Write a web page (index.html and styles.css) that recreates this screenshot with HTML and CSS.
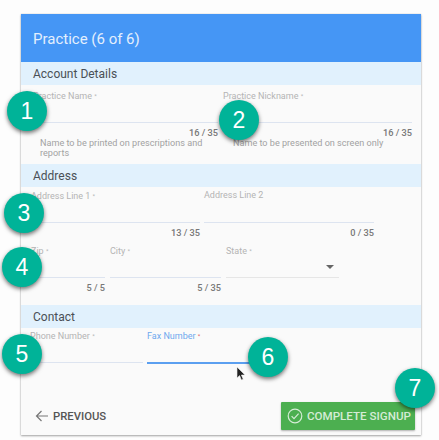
FILE: index.html
```html
<!DOCTYPE html>
<html lang="en">
<head>
<meta charset="utf-8">
<title>Practice</title>
<link rel="stylesheet" href="styles.css">
</head>
<body>
<main class="card">
  <header class="card-head">Practice (6 of 6)</header>
  <h2 class="band">Account Details</h2>
  <div class="row row-account">
    <div class="field f-name">
      <label class="lbl">Practice Name <i>*</i></label>
      <div class="line"></div>
      <div class="count">16 / 35</div>
      <p class="hint">Name to be printed on prescriptions and reports</p>
    </div>
    <div class="field f-nick">
      <label class="lbl">Practice Nickname <i>*</i></label>
      <div class="line"></div>
      <div class="count">16 / 35</div>
      <p class="hint">Name to be presented on screen only</p>
    </div>
  </div>
  <h2 class="band">Address</h2>
  <div class="row row-address">
    <div class="field f-addr1">
      <label class="lbl">Address Line 1 <i>*</i></label>
      <div class="line"></div>
      <div class="count">13 / 35</div>
    </div>
    <div class="field f-addr2">
      <label class="lbl">Address Line 2</label>
      <div class="line"></div>
      <div class="count">0 / 35</div>
    </div>
  </div>
  <div class="row row-city">
    <div class="field f-zip">
      <label class="lbl">Zip <i>*</i></label>
      <div class="line"></div>
      <div class="count">5 / 5</div>
    </div>
    <div class="field f-city">
      <label class="lbl">City <i>*</i></label>
      <div class="line"></div>
      <div class="count">5 / 35</div>
    </div>
    <div class="field f-state">
      <label class="lbl">State <i>*</i></label>
      <span class="caret"></span>
      <div class="line line-plain"></div>
    </div>
  </div>
  <h2 class="band">Contact</h2>
  <div class="row row-contact">
    <div class="field f-phone">
      <label class="lbl">Phone Number <i>*</i></label>
      <div class="line"></div>
    </div>
    <div class="field f-fax">
      <label class="lbl lbl-focus">Fax Number <i>*</i></label>
      <div class="line line-focus"></div>
    </div>
  </div>
  <footer class="actions">
    <button class="btn-prev" type="button">
      <svg width="13" height="12" viewBox="0 0 13 12" aria-hidden="true"><path d="M6.5 1 1.5 6l5 5M1.5 6H13" fill="none" stroke="#777" stroke-width="1.2"/></svg>
      PREVIOUS
    </button>
    <button class="btn-done" type="button">
      <svg width="16" height="16" viewBox="0 0 16 16" aria-hidden="true"><circle cx="8" cy="8" r="6.8" fill="none" stroke="#d5ecd6" stroke-width="1.2"/><path d="M4.6 8.2 7 10.6l4.6-5" fill="none" stroke="#d5ecd6" stroke-width="1.2"/></svg>
      COMPLETE SIGNUP
    </button>
  </footer>
</main>
<span class="badge b1">1</span>
<span class="badge b2">2</span>
<span class="badge b3">3</span>
<span class="badge b4">4</span>
<span class="badge b5">5</span>
<span class="badge b6">6</span>
<span class="badge b7">7</span>
<svg class="cursor" width="10" height="16" viewBox="0 0 10 16" aria-hidden="true"><path d="M1 1v11l2.6-2.4L5.4 14l1.8-.8-1.8-4.2H9z" fill="#222" stroke="#eee" stroke-width=".6"/></svg>
</body>
</html>
```
FILE: styles.css
```css
* { box-sizing: border-box; }
html, body { margin: 0; height: 440px; overflow: hidden; }
body {
  position: relative;
  background: #fdfdfd;
  font-family: Roboto, "Liberation Sans", sans-serif;
  padding: 14px 18px 0 21px;
}
.card {
  width: 400px;
  height: 421px;
  background: #fafafa;
  box-shadow: 0 1px 2px rgba(0,0,0,.35), 0 0 1px rgba(0,0,0,.2);
  display: flex;
  flex-direction: column;
}
.card-head {
  height: 48px;
  flex: none;
  background: #4596f5;
  color: #e3effd;
  font-size: 15px;
  padding: 15px 0 0 12px;
  line-height: 20px;
}
.band {
  margin: 0;
  height: 23px;
  flex: none;
  background: #e1f1fd;
  color: #4a5056;
  font-size: 12px;
  font-weight: 400;
  line-height: 24px;
  padding-left: 12px;
}
.row { display: flex; flex: none; }
.row-account { padding: 5px 0 0 12px; gap: 5px; height: 79px; }
.row-address { padding: 3px 0 0 10px; gap: 4px; height: 58px; }
.row-city { padding: 0 0 0 10px; gap: 5px; height: 60px; }
.row-contact { padding: 2px 0 0 9px; gap: 4px; height: 60px; }
.field { position: relative; display: flex; flex-direction: column; }
.f-name { width: 185px; }
.f-nick { width: 189px; }
.f-addr1 { width: 169px; }
.f-addr2 { width: 170px; }
.f-zip { width: 74px; }
.f-city { width: 111px; }
.f-state { width: 113px; }
.f-phone { width: 113px; }
.f-fax { width: 113px; }
.lbl {
  display: block;
  height: 11px;
  font-size: 9px;
  line-height: 11px;
  color: #b4b4b4;
  white-space: nowrap;
}
.lbl i { font-style: normal; font-size: 6px; vertical-align: 1px; }
.lbl-focus { color: #6fa9ee; }
.lbl-focus i { color: #e06060; }
.line { margin-top: 21px; height: 1px; background: #dde4f0; flex: none; }
.line-plain { background: #e6e6e6; }
.line-focus { height: 1.5px; background: #5b9ff0; }
.count {
  font-size: 9.2px;
  font-weight: 500;
  line-height: 11px;
  margin-top: 4px;
  color: #777;
  text-align: right;
}
.hint {
  margin: 0;
  padding: 0 0 0 7px;
  font-size: 9.1px;
  line-height: 10px;
  color: #a2a2a2;
}
.f-nick .hint { padding-left: 10px; }
.caret {
  position: absolute;
  right: 5px;
  top: 20px;
  width: 0;
  height: 0;
  border-left: 4px solid transparent;
  border-right: 4px solid transparent;
  border-top: 4px solid #666;
}
.actions {
  display: flex;
  justify-content: space-between;
  align-items: center;
  padding: 14px 6px 0 14px;
}
.btn-prev, .btn-done {
  border: 0;
  margin: 0;
  font-family: inherit;
  display: flex;
  align-items: center;
  white-space: nowrap;
}
.btn-prev {
  background: none;
  color: #555;
  font-size: 11.3px;
  font-weight: 500;
  gap: 5px;
  padding: 0;
  height: 16px;
}
.btn-done {
  width: 134px;
  height: 28px;
  background: #4caf50;
  color: #d5ecd6;
  font-size: 11.6px;
  font-weight: 500;
  gap: 4px;
  padding: 0 0 0 6px;
  border-radius: 1px;
  box-shadow: 0 1px 2px rgba(0,0,0,.3);
}
.badge {
  position: absolute;
  width: 40px;
  height: 40px;
  border-radius: 50%;
  background: #00b398;
  color: #fff;
  font-family: "Liberation Sans", Arial, sans-serif;
  font-size: 23px;
  line-height: 40px;
  text-align: center;
  box-shadow: 0 2px 4px rgba(0,0,0,.55);
}
.b1 { left: 7px; top: 91px; }
.b2 { left: 219px; top: 100px; }
.b3 { left: 4px; top: 193px; }
.b4 { left: 2px; top: 247px; }
.b5 { left: 2px; top: 334px; }
.b6 { left: 248px; top: 337px; }
.b7 { left: 395px; top: 368px; }
.cursor { position: absolute; left: 236px; top: 366px; }
```
